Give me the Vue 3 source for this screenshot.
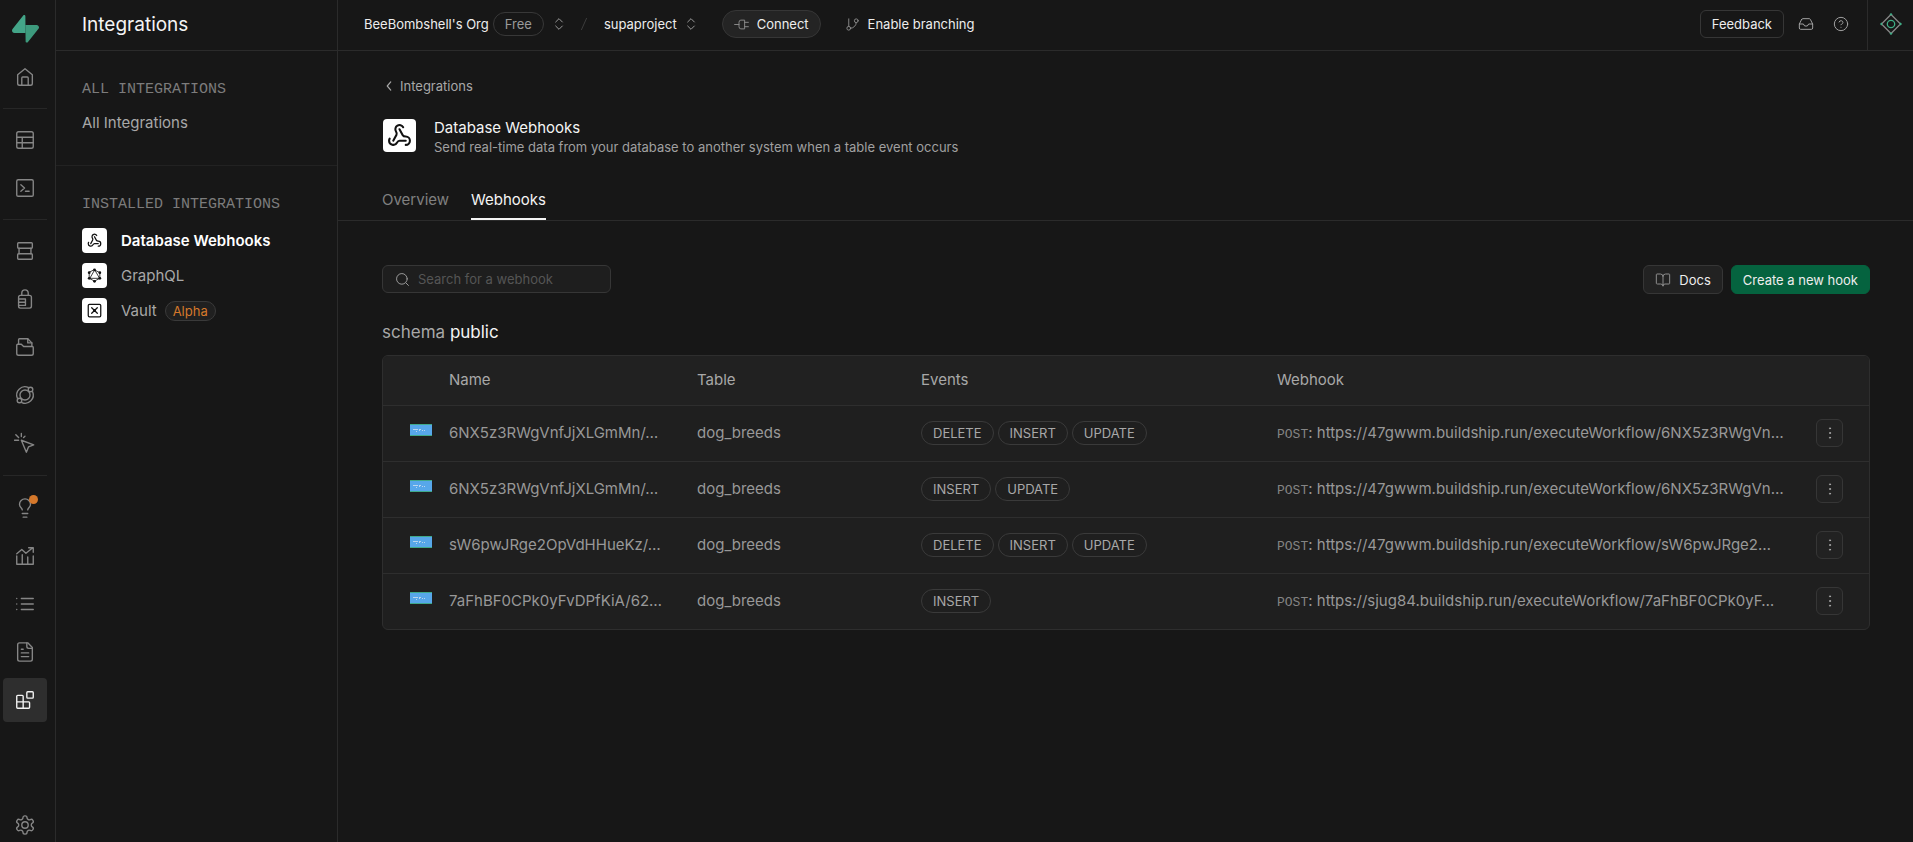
<script setup>
import { h, ref } from 'vue'

const paths = {
  home: '<path d="M4 9.500 12 3l8 6.500V19a2 2 0 0 1-2 2H6a2 2 0 0 1-2-2z"/><path d="M8.500 21v-8a1 1 0 0 1 1-1h5a1 1 0 0 1 1 1v8"/>',
  table: '<rect x="3" y="3" width="18" height="18" rx="2"/><path d="M3 9h18M3 15h18M9 9v12"/>',
  terminal: '<rect x="3" y="3" width="18" height="18" rx="1.500"/><path d="m7.500 8.500 4 3.500-4 3.500M12.500 15.500h4"/>',
  database: '<rect x="4" y="3" width="16" height="6" rx="1"/><rect x="4" y="15" width="16" height="6" rx="1"/><path d="M5.500 9v6M18.500 9v6"/>',
  lock: '<path d="M8.500 8V5.500a3.500 3.500 0 0 1 7 0V8"/><rect x="5" y="8" width="14" height="14" rx="2"/><path d="M5 12h7.500v7H5M5 15.500h7.500"/>',
  storage: '<path d="M5 9V4a1 1 0 0 1 1-1h9l4.500 4.500V11"/><path d="M15 3v4.500h4.500"/><path d="M3 10a1 1 0 0 1 1-1h4l2.500 2.500H20a1 1 0 0 1 1 1V19a2 2 0 0 1-2 2H5a2 2 0 0 1-2-2z"/>',
  edge: '<circle cx="12" cy="12" r="5.500"/><circle cx="18" cy="6" r="2.500"/><circle cx="6" cy="18" r="2.500"/><path d="M15.500 3.700A9 9 0 0 0 3.700 15.500M8.500 20.300A9 9 0 0 0 20.300 8.500"/>',
  pointer: '<path d="m8 9 5.500 13 2.300-5.700L21.500 14zM8 1.500V5M.5 9H5M2 3l3 3M12 4.500 10.500 6"/>',
  bulb: '<path d="M15 14c.2-1 .7-1.700 1.500-2.500 1-.9 1.500-2.200 1.500-3.500A6 6 0 0 0 6 8c0 1 .2 2.200 1.500 3.500.7.700 1.300 1.500 1.500 2.500M9 18h6M10 22h4"/>',
  chart: '<path d="M3 9.500 8.500 5l4.500 4 7.500-6M16 3h5v5M3 12v9h18v-9M9 10.500V21M15 13v8"/>',
  list: '<path d="M8 6h13M8 12h13M8 18h13M3 6h.01M3 12h.01M3 18h.01"/>',
  file: '<path d="M15 2H6a2 2 0 0 0-2 2v16a2 2 0 0 0 2 2h12a2 2 0 0 0 2-2V7Z"/><path d="M14 2v4a2 2 0 0 0 2 2h4M10 9H8M16 13H8M16 17H8"/>',
  blocks: '<rect x="14" y="3" width="7" height="7" rx="1"/><path d="M10 21V8a1 1 0 0 0-1-1H4a1 1 0 0 0-1 1v12a1 1 0 0 0 1 1h12a1 1 0 0 0 1-1v-5a1 1 0 0 0-1-1H3"/>',
  settings: '<path d="M12.220 2h-.44a2 2 0 0 0-2 2v.18a2 2 0 0 1-1 1.730l-.43.25a2 2 0 0 1-2 0l-.15-.08a2 2 0 0 0-2.730.73l-.22.38a2 2 0 0 0 .73 2.730l.15.1a2 2 0 0 1 1 1.720v.51a2 2 0 0 1-1 1.740l-.15.09a2 2 0 0 0-.73 2.730l.22.38a2 2 0 0 0 2.730.73l.15-.08a2 2 0 0 1 2 0l.43.25a2 2 0 0 1 1 1.730V20a2 2 0 0 0 2 2h.44a2 2 0 0 0 2-2v-.18a2 2 0 0 1 1-1.730l.43-.25a2 2 0 0 1 2 0l.15.08a2 2 0 0 0 2.730-.73l.22-.39a2 2 0 0 0-.73-2.730l-.15-.08a2 2 0 0 1-1-1.740v-.5a2 2 0 0 1 1-1.740l.15-.09a2 2 0 0 0 .73-2.730l-.22-.38a2 2 0 0 0-2.730-.73l-.15.08a2 2 0 0 1-2 0l-.43-.25a2 2 0 0 1-1-1.730V4a2 2 0 0 0-2-2z"/><circle cx="12" cy="12" r="3.500"/>',
  webhook: '<path d="M18 16.980h-5.990c-1.100 0-1.950.94-2.480 1.900A4 4 0 0 1 2 17c.01-.7.2-1.400.57-2"/><path d="m6 17 3.130-5.780c.53-.97.1-2.180-.5-3.100a4 4 0 1 1 6.890-4.060"/><path d="m12 6 3.130 5.730C15.660 12.700 16.900 13 18 13a4 4 0 0 1 0 8"/>',
  graphql: '<path d="m12 3 8.500 4.500v9L12 21l-8.500-4.500v-9zM12 3.500 4.500 16.500h15z"/><g fill="currentColor" stroke="none"><circle cx="12" cy="2.800" r="2.200"/><circle cx="20.500" cy="7.500" r="2.200"/><circle cx="20.500" cy="16.500" r="2.200"/><circle cx="12" cy="21.200" r="2.200"/><circle cx="3.500" cy="16.500" r="2.200"/><circle cx="3.500" cy="7.500" r="2.200"/></g>',
  vault: '<rect x="2" y="2" width="20" height="20" rx="2"/><path d="m7.500 7.500 9 9M16.500 7.500l-9 9"/><circle cx="12" cy="12" r="1.500"/>',
  chevrons: '<path d="m7 15 5 5 5-5M7 9l5-5 5 5"/>',
  plug: '<path d="M1 12h7M8 8a3 3 0 0 1 3-3h6v14h-6a3 3 0 0 1-3-3zM17 8.500h6M17 15.500h6"/>',
  branch: '<path d="M6 3v12M18 9a9 9 0 0 1-9 9"/><circle cx="18" cy="6" r="3"/><circle cx="6" cy="18" r="3"/>',
  inbox: '<path d="M22 12h-6l-2 3h-4l-2-3H2"/><path d="M5.450 5.110 2 12v6a2 2 0 0 0 2 2h16a2 2 0 0 0 2-2v-6l-3.450-6.890A2 2 0 0 0 16.760 4H7.240a2 2 0 0 0-1.790 1.110z"/>',
  help: '<circle cx="12" cy="12" r="10"/><path d="M9.090 9a3 3 0 0 1 5.830 1c0 2-3 3-3 3M12 17h.01"/>',
  back: '<path d="m15 19-6-7 6-7"/>',
  search: '<circle cx="11" cy="11" r="8.500"/><path d="m17.500 17.500 4 4"/>',
  book: '<path d="M12 7v14M3 18a1 1 0 0 1-1-1V4a1 1 0 0 1 1-1h5a4 4 0 0 1 4 4 4 4 0 0 1 4-4h5a1 1 0 0 1 1 1v13a1 1 0 0 1-1 1h-6a3 3 0 0 0-3 3 3 3 0 0 0-3-3z"/>',
  more: '<g fill="currentColor"><circle cx="12" cy="4" r="1"/><circle cx="12" cy="12" r="1"/><circle cx="12" cy="20" r="1"/></g>',
}

const Icon = (props) =>
  h('svg', {
    viewBox: '0 0 24 24',
    width: props.size,
    height: props.size,
    fill: 'none',
    stroke: 'currentColor',
    'stroke-width': props.stroke ?? 1.5,
    'stroke-linecap': 'round',
    'stroke-linejoin': 'round',
    'aria-hidden': 'true',
    innerHTML: paths[props.name],
  })
Icon.props = ['name', 'size', 'stroke']

const railGroups = [
  [{ icon: 'home', label: 'Home' }],
  [{ icon: 'table', label: 'Table Editor' }, { icon: 'terminal', label: 'SQL Editor' }],
  [
    { icon: 'database', label: 'Database' },
    { icon: 'lock', label: 'Authentication' },
    { icon: 'storage', label: 'Storage' },
    { icon: 'edge', label: 'Edge Functions' },
    { icon: 'pointer', label: 'Realtime' },
  ],
  [
    { icon: 'bulb', label: 'Advisors', alert: true },
    { icon: 'chart', label: 'Reports' },
    { icon: 'list', label: 'Logs' },
    { icon: 'file', label: 'API Docs' },
    { icon: 'blocks', label: 'Integrations', active: true },
  ],
]

const installed = [
  { icon: 'webhook', name: 'Database Webhooks', stroke: 2, active: true },
  { icon: 'graphql', name: 'GraphQL', stroke: 1.3 },
  { icon: 'vault', name: 'Vault', stroke: 2, tag: 'Alpha' },
]

const search = ref('')

const hooks = [
  { name: '6NX5z3RWgVnfJjXLGmMn/…', table: 'dog_breeds', events: ['DELETE', 'INSERT', 'UPDATE'], url: 'https://47gwwm.buildship.run/executeWorkflow/6NX5z3RWgVn…' },
  { name: '6NX5z3RWgVnfJjXLGmMn/…', table: 'dog_breeds', events: ['INSERT', 'UPDATE'], url: 'https://47gwwm.buildship.run/executeWorkflow/6NX5z3RWgVn…' },
  { name: 'sW6pwJRge2OpVdHHueKz/…', table: 'dog_breeds', events: ['DELETE', 'INSERT', 'UPDATE'], url: 'https://47gwwm.buildship.run/executeWorkflow/sW6pwJRge2…' },
  { name: '7aFhBF0CPk0yFvDPfKiA/62…', table: 'dog_breeds', events: ['INSERT'], url: 'https://sjug84.buildship.run/executeWorkflow/7aFhBF0CPk0yF…' },
]
</script>

<template>
  <div class="app">
    <nav class="rail" aria-label="Project">
      <a class="logo" href="#" aria-label="Supabase">
        <svg viewBox="0 0 109 113" width="27" height="28" aria-hidden="true">
          <path fill="#3d9a7d" d="M63.700 110.300c-2.900 3.600-8.600 1.600-8.700-3L54 40h45.200c8.200 0 12.800 9.500 7.700 15.900z" />
          <path fill="#43a588" d="M45.300 2.100c2.900-3.600 8.700-1.700 8.700 2.900l.5 67.300H9.800c-8.200 0-12.700-9.500-7.600-15.900z" />
        </svg>
      </a>
      <ul v-for="(group, i) in railGroups" :key="i" class="rail-group">
        <li v-for="item in group" :key="item.icon">
          <a class="rail-item" :class="{ active: item.active }" href="#" :aria-label="item.label">
            <Icon :name="item.icon" :size="22" />
            <span v-if="item.alert" class="alert-dot"></span>
          </a>
        </li>
      </ul>
      <a class="rail-item rail-settings" href="#" aria-label="Project Settings">
        <Icon name="settings" :size="22" />
      </a>
    </nav>

    <aside class="sidebar">
      <h1 class="sidebar-title">Integrations</h1>
      <section class="side-section">
        <h2 class="side-heading">ALL INTEGRATIONS</h2>
        <a class="side-link" href="#">All Integrations</a>
      </section>
      <section class="side-section">
        <h2 class="side-heading">INSTALLED INTEGRATIONS</h2>
        <ul class="installed">
          <li v-for="item in installed" :key="item.name">
            <a class="side-link" :class="{ active: item.active }" href="#">
              <span class="app-icon"><Icon :name="item.icon" :size="15" :stroke="item.stroke" /></span>
              <span>{{ item.name }}</span>
              <span v-if="item.tag" class="tag">{{ item.tag }}</span>
            </a>
          </li>
        </ul>
      </section>
    </aside>

    <div class="page">
      <header class="topbar">
        <a class="crumb" href="#">BeeBombshell's Org</a>
        <span class="plan">Free</span>
        <button class="switcher" type="button" aria-label="Switch organization"><Icon name="chevrons" :size="16" /></button>
        <svg class="slash" viewBox="0 0 24 24" width="16" height="16" aria-hidden="true"><path d="M16 3 8 21" /></svg>
        <a class="crumb" href="#">supaproject</a>
        <button class="switcher" type="button" aria-label="Switch project"><Icon name="chevrons" :size="16" /></button>
        <button class="btn connect" type="button"><Icon name="plug" :size="15" />Connect</button>
        <button class="btn branching" type="button"><Icon name="branch" :size="15" />Enable branching</button>
        <div class="topbar-end">
          <button class="btn feedback" type="button">Feedback</button>
          <button class="icon-btn" type="button" aria-label="Notifications"><Icon name="inbox" :size="16" /></button>
          <button class="icon-btn" type="button" aria-label="Help"><Icon name="help" :size="16" /></button>
          <button class="assistant" type="button" aria-label="Assistant">
            <svg viewBox="0 0 22 22" width="22" height="22" fill="none" aria-hidden="true">
              <path d="M11 1.500 20.500 11 11 20.500 1.500 11z" stroke="#868686" stroke-width="1.300" />
              <circle cx="11" cy="11" r="3.700" stroke="#3fae86" stroke-width="1.300" />
              <path d="m10 2 1-1 1 1M10 20l1 1 1-1M2 10l-1 1 1 1M20 10l1 1-1 1" stroke="#3fae86" stroke-width="1.500" />
            </svg>
          </button>
        </div>
      </header>

      <main>
        <div class="intro">
          <a class="back" href="#"><Icon name="back" :size="14" :stroke="2" />Integrations</a>
          <div class="heading">
            <span class="app-icon large"><Icon name="webhook" :size="25" :stroke="2" /></span>
            <div>
              <h2>Database Webhooks</h2>
              <p>Send real-time data from your database to another system when a table event occurs</p>
            </div>
          </div>
        </div>
        <nav class="tabs" aria-label="Integration">
          <a class="tab" href="#">Overview</a>
          <a class="tab active" href="#" aria-current="page">Webhooks</a>
        </nav>

        <div class="content">
          <div class="toolbar">
            <label class="search">
              <Icon name="search" :size="15" />
              <input v-model="search" type="text" placeholder="Search for a webhook" aria-label="Search for a webhook" />
            </label>
            <div class="actions">
              <button class="btn docs" type="button"><Icon name="book" :size="16" />Docs</button>
              <button class="btn create" type="button">Create a new hook</button>
            </div>
          </div>

          <h3 class="schema">schema <strong>public</strong></h3>

          <div class="table-wrap">
            <table>
              <colgroup>
                <col class="c-icon" /><col class="c-name" /><col class="c-table" /><col class="c-events" /><col /><col class="c-more" />
              </colgroup>
              <thead>
                <tr>
                  <th></th><th scope="col">Name</th><th scope="col">Table</th><th scope="col">Events</th><th scope="col">Webhook</th><th></th>
                </tr>
              </thead>
              <tbody>
                <tr v-for="(hook, i) in hooks" :key="i">
                  <td>
                    <svg class="thumb" viewBox="0 0 22 12" width="22" height="12" aria-hidden="true">
                      <path fill="#3fa98b" d="M0 0h22v12H0z" />
                      <path fill="#57a7ea" d="M0 1h22v10H0z" />
                      <path fill="#b9d6ee" d="M3 5h5v1H3zM6 7h1v1H6zM9 5h2v1H9zM9 6h1v1H9zM12 6h1v1h-1zM14 6h1v1h-1z" />
                    </svg>
                  </td>
                  <td>{{ hook.name }}</td>
                  <td>{{ hook.table }}</td>
                  <td>
                    <div class="events"><span v-for="e in hook.events" :key="e" class="event">{{ e }}</span></div>
                  </td>
                  <td class="url"><code>POST</code>: {{ hook.url }}</td>
                  <td>
                    <button class="more" type="button" aria-label="Webhook actions"><Icon name="more" :size="14" /></button>
                  </td>
                </tr>
              </tbody>
            </table>
          </div>
        </div>
      </main>
    </div>
  </div>
</template>

<style>
body { margin: 0; background: #171717; }
</style>

<style scoped>
.app {
  display: flex;
  min-height: 100vh;
  background: #171717;
  color: #ededed;
  font-family: Inter, "Liberation Sans", sans-serif;
  font-size: 15px;
  line-height: 20px;
}
*, *::before, *::after { box-sizing: border-box; }
a { color: inherit; text-decoration: none; }
button { font: inherit; color: inherit; background: none; border: 0; padding: 0; }
ul { list-style: none; margin: 0; padding: 0; }
h1, h2, h3, p { margin: 0; font-weight: 400; }
svg { display: block; flex: none; }

.rail {
  flex: none;
  width: 56px;
  display: flex;
  flex-direction: column;
  border-right: 1px solid #2b2b2b;
  padding: 0 3px;
}
.logo { height: 55px; padding: 15px 0 0 9px; }
.rail-group { width: 44px; display: flex; flex-direction: column; gap: 4px; }
.rail-group + .rail-group { border-top: 1px solid #272727; margin-top: 9px; padding-top: 9px; }
.rail-item {
  position: relative;
  width: 44px;
  height: 44px;
  display: flex;
  align-items: center;
  justify-content: center;
  border-radius: 4px;
  color: #868686;
}
.rail-item.active { background: #2e2e2e; color: #f4f4f4; }
.rail-group:last-of-type { margin-top: 10px; padding-top: 10px; }
.rail-settings { height: 34px; margin-top: auto; }
.alert-dot {
  position: absolute;
  top: 9px;
  right: 9px;
  width: 9px;
  height: 9px;
  border-radius: 50%;
  background: #d5782b;
}

.sidebar { flex: none; width: 282px; border-right: 1px solid #2b2b2b; }
.sidebar-title {
  height: 51px;
  padding: 0 26px;
  border-bottom: 1px solid #2b2b2b;
  font-size: 19px;
  line-height: 49px;
  color: #f4f4f4;
}
.side-section { padding: 29px 26px 32px; }
.side-section + .side-section { border-top: 1px solid #222; }
.side-heading {
  margin-bottom: 13px;
  font-family: "Liberation Mono", monospace;
  font-size: 15px;
  color: #7c7c7c;
}
.side-link { display: flex; align-items: center; color: #a8a8a8; }
.side-link.active { color: #fff; font-weight: 600; }
.installed { display: flex; flex-direction: column; gap: 10px; }
.installed .side-link { height: 25px; }
.app-icon {
  width: 25px;
  height: 25px;
  margin-right: 14px;
  display: flex;
  flex: none;
  align-items: center;
  justify-content: center;
  border-radius: 4px;
  background: #fff;
  color: #111;
}
.tag {
  margin-left: 8px;
  padding: 0 7px;
  border: 1px solid #3a3a3a;
  border-radius: 10px;
  background: #202020;
  color: #d5782b;
  font-size: 13px;
  line-height: 18px;
}

.page { flex: 1; min-width: 0; }
.topbar {
  height: 51px;
  padding: 0 0 2px 26px;
  display: flex;
  align-items: center;
  border-bottom: 1px solid #2b2b2b;
  font-size: 13px;
  white-space: nowrap;
}
.plan {
  margin: 0 6px 0 4px;
  padding: 0 11px;
  border: 1px solid #383838;
  border-radius: 12px;
  line-height: 22px;
  color: #9a9a9a;
}
.switcher { padding: 0 1px; color: #9a9a9a; }
.slash { margin: 0 12px 0 8px; fill: none; stroke: #3c3c3c; stroke-width: 1.500; }
.slash + .crumb + .switcher { margin-left: 5px; }
.btn {
  height: 28px;
  display: flex;
  align-items: center;
  gap: 8px;
  padding: 0 11px;
  border: 1px solid #363636;
  border-radius: 6px;
  white-space: nowrap;
  font-size: 13px;
  line-height: 18px;
}
.btn svg { color: #8d8d8d; }
.connect { margin-left: 22px; border-radius: 14px; background: #242424; }
.branching { margin-left: 12px; border-color: transparent; }
.topbar-end { margin-left: auto; display: flex; align-items: center; }
.icon-btn { margin-left: 14px; color: #a0a0a0; }
.icon-btn + .icon-btn { margin-left: 19px; }
.assistant {
  width: 46px;
  height: 50px;
  margin: 1px 0 -1px 18px;
  padding: 0 0 2px 12px;
  border-left: 1px solid #2b2b2b;
}

.intro { padding: 25px 44px 0; }
.back { display: inline-flex; align-items: center; gap: 4px; color: #a8a8a8; font-size: 13px; }
.heading { display: flex; margin-top: 20px; }
.app-icon.large { width: 33px; height: 33px; margin: 1px 18px 0 1px; }
.heading h2 { color: #f4f4f4; font-size: 15px; line-height: 20px; }
.heading p { color: #a0a0a0; font-size: 13px; line-height: 18px; }
.tabs {
  display: flex;
  gap: 22px;
  margin-top: 28px;
  padding: 0 44px;
  border-bottom: 1px solid #2b2b2b;
}
.tab { padding: 6px 0 8px; color: #808080; border-bottom: 2px solid transparent; }
.tab.active { color: #f4f4f4; border-color: #f4f4f4; }

.content { padding: 44px 43px 40px 44px; }
.toolbar { display: flex; justify-content: space-between; height: 29px; }
.search {
  width: 229px;
  height: 28px;
  display: flex;
  align-items: center;
  gap: 8px;
  padding: 0 12px;
  border: 1px solid #363636;
  border-radius: 6px;
  background: #1e1e1e;
  color: #a0a0a0;
}
.search input {
  flex: 1;
  min-width: 0;
  padding: 0;
  border: 0;
  outline: 0;
  background: none;
  color: #ededed;
  font: inherit;
  font-size: 13px;
}
.search input::placeholder { color: #555; opacity: 1; }
.actions { display: flex; gap: 8px; }
.actions .btn { height: 29px; }
.docs { background: #222; }
.create { background: #05633f; border-color: #05633f; }

.schema { margin: 28px 0 13px; font-size: 17px; line-height: 20px; color: #a8a8a8; }
.schema strong { color: #f4f4f4; font-weight: 400; }

.table-wrap { border: 1px solid #2e2e2e; border-radius: 6px; overflow: hidden; background: #1f1f1f; }
table { width: 100%; table-layout: fixed; border-collapse: collapse; }
.c-icon { width: 66px; }
.c-name { width: 248px; }
.c-table { width: 224px; }
.c-events { width: 356px; }
.c-more { width: 53px; }
th {
  height: 49px;
  padding: 0;
  background: #212121;
  color: #a8a8a8;
  font-weight: 400;
  text-align: left;
}
td {
  height: 56px;
  padding: 0;
  border-top: 1px solid #2e2e2e;
  color: #989898;
  white-space: nowrap;
}
.thumb { margin: -6px 0 0 27px; }
.events { display: flex; gap: 4px; }
.event {
  padding: 0 11px;
  border: 1px solid #3a3a3a;
  border-radius: 12px;
  color: #a8a8a8;
  font-size: 13px;
  line-height: 22px;
}
.url { overflow: hidden; text-overflow: ellipsis; }
.url code { font-family: "Liberation Mono", monospace; font-size: 13px; line-height: 1; color: #848484; }
.more {
  width: 27px;
  height: 28px;
  display: flex;
  align-items: center;
  justify-content: center;
  border: 1px solid #363636;
  border-radius: 6px;
  background: #222;
  color: #a8a8a8;
}
</style>
